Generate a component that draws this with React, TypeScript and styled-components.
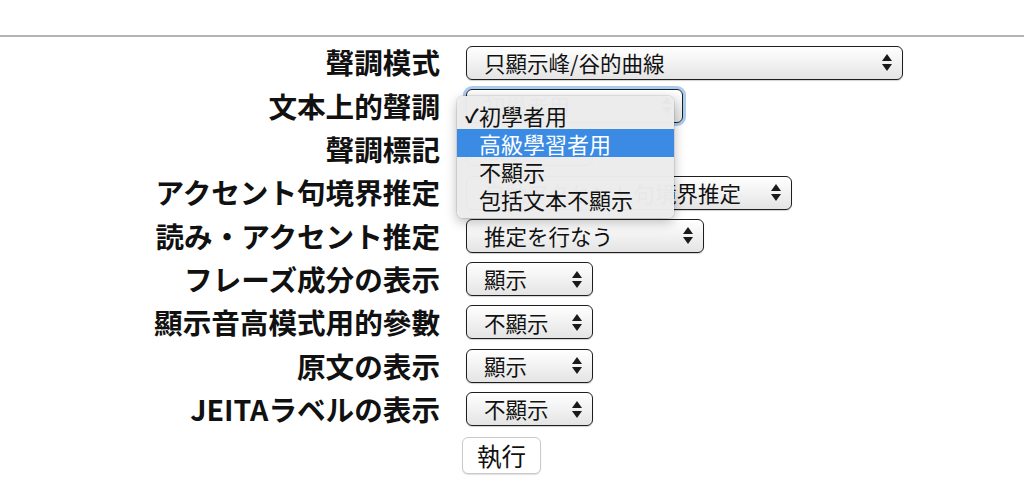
import { Fragment } from "react";
import styled, { createGlobalStyle } from "styled-components";

const GlobalStyle = createGlobalStyle`
  html, body {
    margin: 0;
    background: #fff;
  }
  body {
    font-family: "Noto Sans CJK JP", "Noto Sans CJK TC", sans-serif;
    color: #111;
  }
`;

const Page = styled.div`
  width: 1024px;
  height: 500px;
  overflow: hidden;
  background: #fff;
`;

const Rule = styled.hr`
  margin: 35px 0 0;
  border: none;
  height: 2px;
  background: #b5b5b5;
`;

const Form = styled.div`
  display: grid;
  grid-template-columns: 440px auto;
  grid-auto-rows: 43.3px;
  column-gap: 26px;
  padding-top: 4px;
  align-items: center;
`;

const Label = styled.div`
  font-size: 28.6px;
  font-weight: 700;
  line-height: 1.2;
  text-align: right;
  white-space: nowrap;
  color: #111;
`;

const Field = styled.div`
  display: flex;
  align-items: center;
`;

const SelectBox = styled.div<{ $width: number; $focused?: boolean }>`
  position: relative;
  box-sizing: border-box;
  width: ${(p) => p.$width}px;
  height: 34px;
  display: flex;
  align-items: center;
  justify-content: space-between;
  padding: 0 10px 0 17px;
  border: 1.5px solid #1e1e1e;
  border-radius: 6px;
  background: linear-gradient(to bottom, #ffffff 0%, #f3f3f3 45%, #e4e4e4 100%);
  box-shadow: ${(p) =>
    p.$focused ? "0 0 0 3px #a9cbef" : "0 1px 1px rgba(0, 0, 0, 0.18)"};
  font-size: 21.5px;
  line-height: 1.2;
  white-space: nowrap;
`;

const Arrows = styled.svg`
  flex-shrink: 0;
  margin-left: 8px;
`;

const Menu = styled.div`
  position: absolute;
  left: -10px;
  top: 6px;
  width: 217px;
  box-sizing: border-box;
  padding: 5px 0 5px;
  background: rgba(236, 236, 236, 0.98);
  border-radius: 6px;
  box-shadow: 0 4px 12px rgba(0, 0, 0, 0.28), 0 0 0 1px rgba(0, 0, 0, 0.08);
  z-index: 5;
`;

const MenuItem = styled.div<{ $active?: boolean }>`
  position: relative;
  height: 28px;
  line-height: 28px;
  padding-left: 22px;
  font-size: 22px;
  white-space: nowrap;
  color: ${(p) => (p.$active ? "#fff" : "#111")};
  background: ${(p) => (p.$active ? "#3b8be4" : "transparent")};
`;

const Check = styled.span`
  position: absolute;
  left: 8px;
  top: 0;
  font-size: 19px;
  font-weight: 700;
`;

const RunButton = styled.button`
  grid-column: 2;
  margin: 6px 0 0 -4px;
  width: 79px;
  height: 37px;
  padding: 0;
  font-family: inherit;
  font-size: 24.5px;
  line-height: 1.2;
  color: #111;
  background: #fff;
  border: 1px solid #c9c9c9;
  border-radius: 6px;
  box-shadow: 0 1px 1px rgba(0, 0, 0, 0.12);
`;

const UpDown = () => (
  <Arrows width="10" height="17" viewBox="0 0 10 17">
    <polygon points="0,7 5,0 10,7" fill="#1a1a1a" />
    <polygon points="0,10 10,10 5,17" fill="#1a1a1a" />
  </Arrows>
);

const rows = [
  { label: "聲調模式", value: "只顯示峰/谷的曲線", width: 437 },
  { label: "文本上的聲調", value: "初學者用", width: 217, open: true },
  { label: "聲調標記", value: "顯示", width: 127 },
  { label: "アクセント句境界推定", value: "自動アクセント句境界推定", width: 326 },
  { label: "読み・アクセント推定", value: "推定を行なう", width: 238 },
  { label: "フレーズ成分の表示", value: "顯示", width: 127 },
  { label: "顯示音高模式用的參數", value: "不顯示", width: 127 },
  { label: "原文の表示", value: "顯示", width: 127 },
  { label: "JEITAラベルの表示", value: "不顯示", width: 127 },
];

const options = ["初學者用", "高級學習者用", "不顯示", "包括文本不顯示"];

function App() {
  return (
    <Page>
      <GlobalStyle />
      <Rule />
      <Form>
        {rows.map((r) => (
          <Fragment key={r.label}>
            <Label>{r.label}</Label>
            <Field>
              <SelectBox $width={r.width} $focused={r.open}>
                <span>{r.value}</span>
                <UpDown />
                {r.open ? (
                  <Menu>
                    {options.map((o, i) => (
                      <MenuItem key={o} $active={i === 1}>
                        {i === 0 ? <Check>✓</Check> : null}
                        {o}
                      </MenuItem>
                    ))}
                  </Menu>
                ) : null}
              </SelectBox>
            </Field>
          </Fragment>
        ))}
        <RunButton>執行</RunButton>
      </Form>
    </Page>
  );
}

export default App;
